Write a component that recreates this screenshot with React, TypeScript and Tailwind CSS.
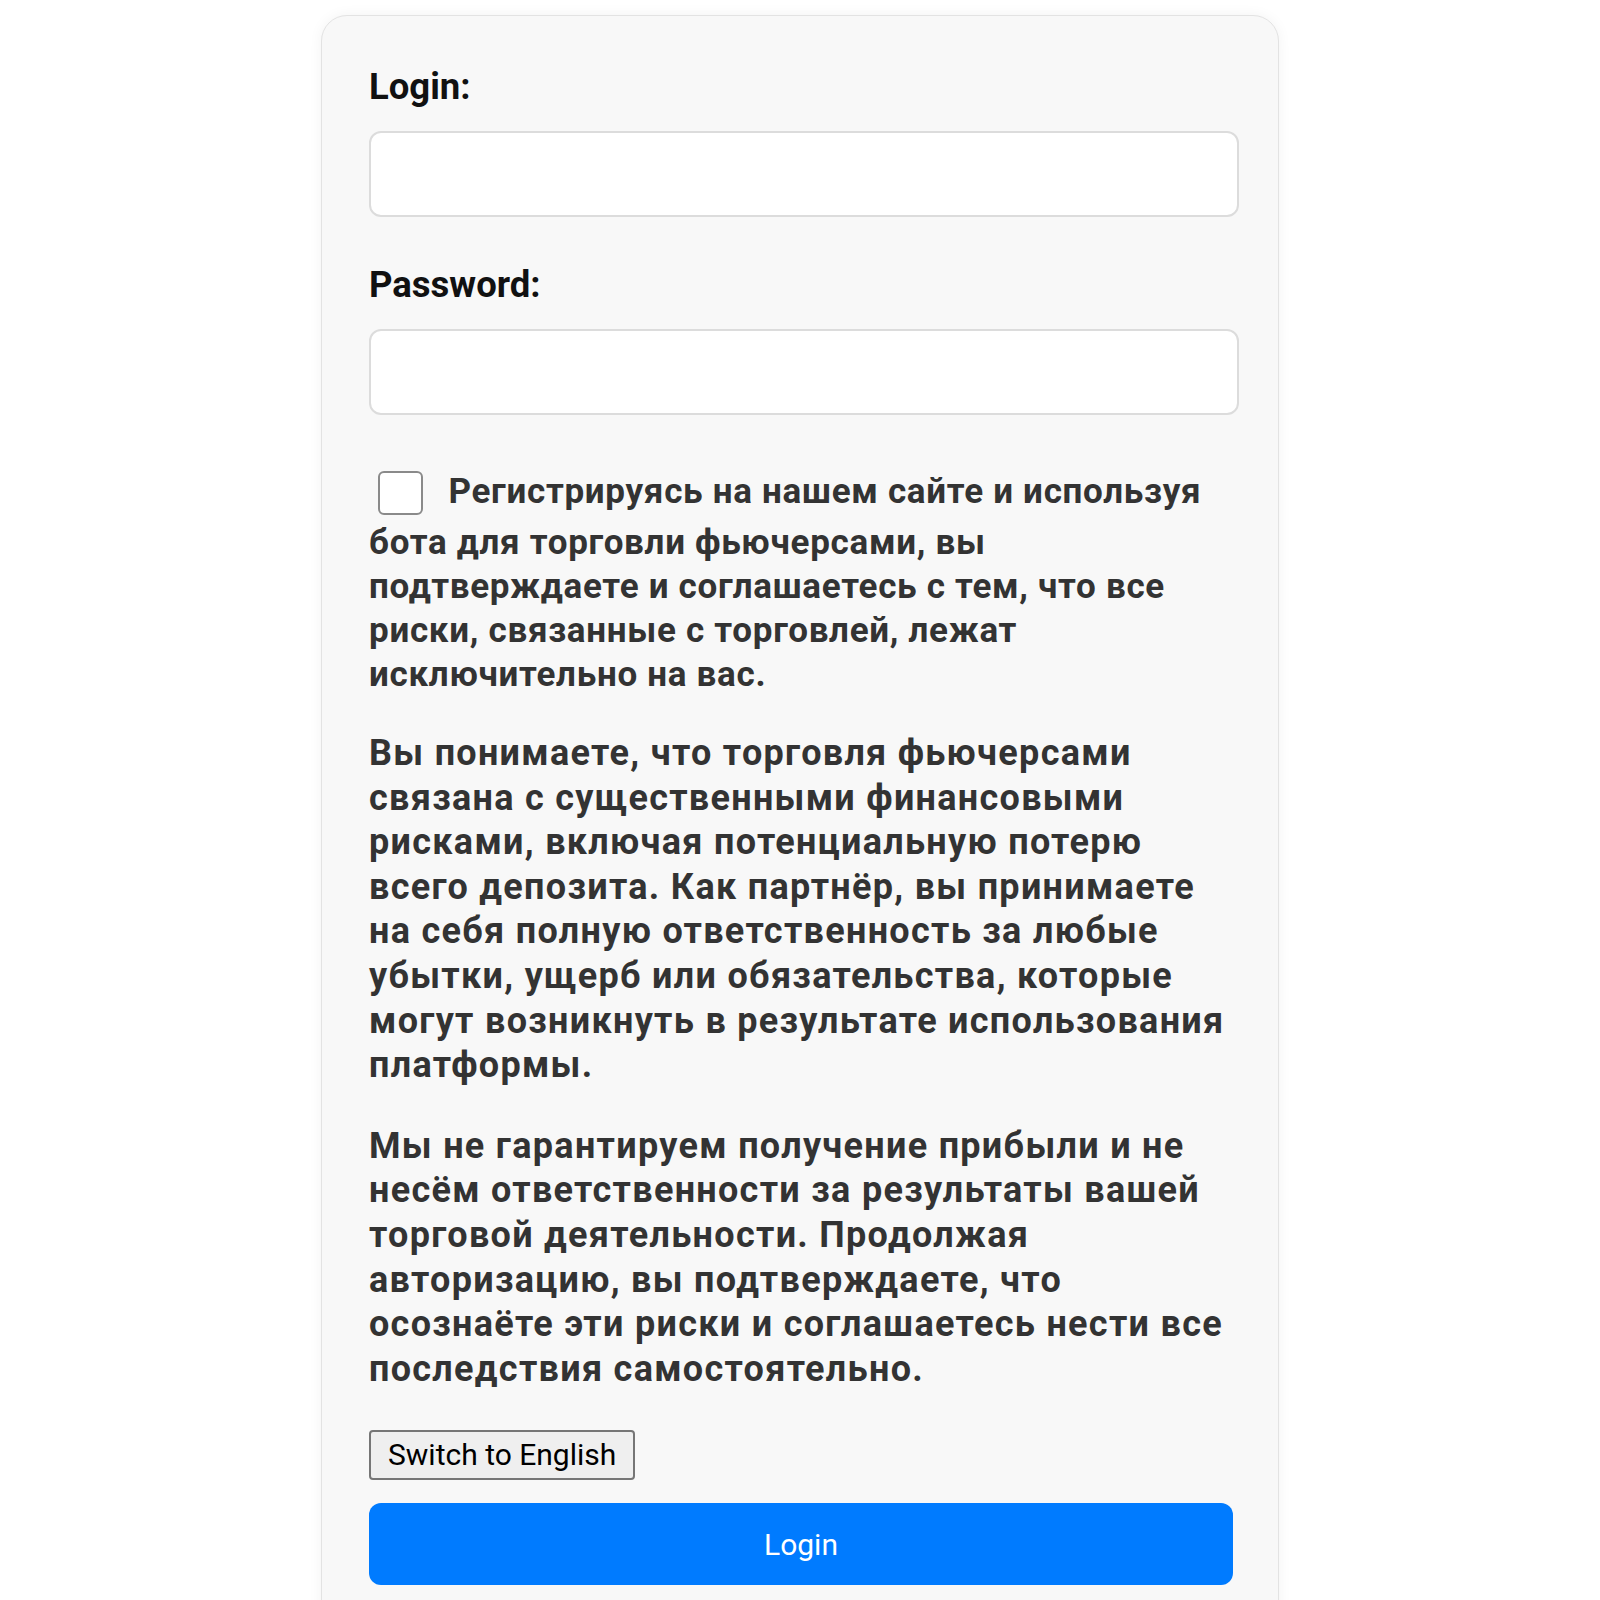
export default function App() {
  return (
    <div className="min-h-[1600px] bg-white flex justify-center pt-[15px] font-['Roboto',sans-serif]">
      <div className="w-[958px] bg-[#f8f8f8] border border-[#e3e3e3] rounded-[26px] shadow-[0_0_14px_rgba(0,0,0,0.05)] pl-[47px] pr-[39px] pt-[49px] pb-[60px] self-start">
        {/* Login */}
        <label className="block text-[36.5px] leading-[43px] font-bold text-[#111]">Login:</label>
        <div className="mt-[23px] h-[86px] w-[870px] bg-white border-2 border-[#dcdcdc] rounded-[12px]" />

        {/* Password */}
        <label className="block mt-[46px] text-[36.5px] leading-[43px] font-bold text-[#111]">Password:</label>
        <div className="mt-[23px] h-[86px] w-[870px] bg-white border-2 border-[#dcdcdc] rounded-[12px]" />

        {/* Disclaimer */}
        <div className="w-[870px] mt-[52px] font-bold text-[#333]">
          <p className="text-[35px] leading-[44px] tracking-[0.7px]">
            <span className="inline-block align-middle w-[45px] h-[44px] ml-[9px] mr-[16px] mt-[4px] mb-[6px] bg-white border-2 border-[#8a8a8a] rounded-[6px]" />{' '}
            Регистрируясь на нашем сайте и используя бота для торговли фьючерсами, вы подтверждаете и соглашаетесь с тем, что все риски, связанные с торговлей, лежат исключительно на вас.
          </p>
          <p className="mt-[34px] text-[36px] leading-[44.6px] tracking-[1.3px]">
            Вы понимаете, что торговля фьючерсами связана с существенными финансовыми рисками, включая потенциальную потерю всего депозита. Как партнёр, вы принимаете на себя полную ответственность за любые убытки, ущерб или обязательства, которые могут возникнуть в результате использования платформы.
          </p>
          <p className="mt-[36px] text-[36px] leading-[44.6px] tracking-[1.3px]">
            Мы не гарантируем получение прибыли и не несём ответственности за результаты вашей торговой деятельности. Продолжая авторизацию, вы подтверждаете, что осознаёте эти риски и соглашаетесь нести все последствия самостоятельно.
          </p>
        </div>

        {/* Actions */}
        <button className="mt-[39px] h-[50px] px-[17px] bg-[#efefef] border-2 border-[#767676] rounded-[4px] text-[30px] leading-none text-black">
          Switch to English
        </button>
        <button className="mt-[23px] block w-[864px] h-[82px] bg-[#007bff] rounded-[12px] text-[30px] text-white">
          Login
        </button>
      </div>
    </div>
  )
}
